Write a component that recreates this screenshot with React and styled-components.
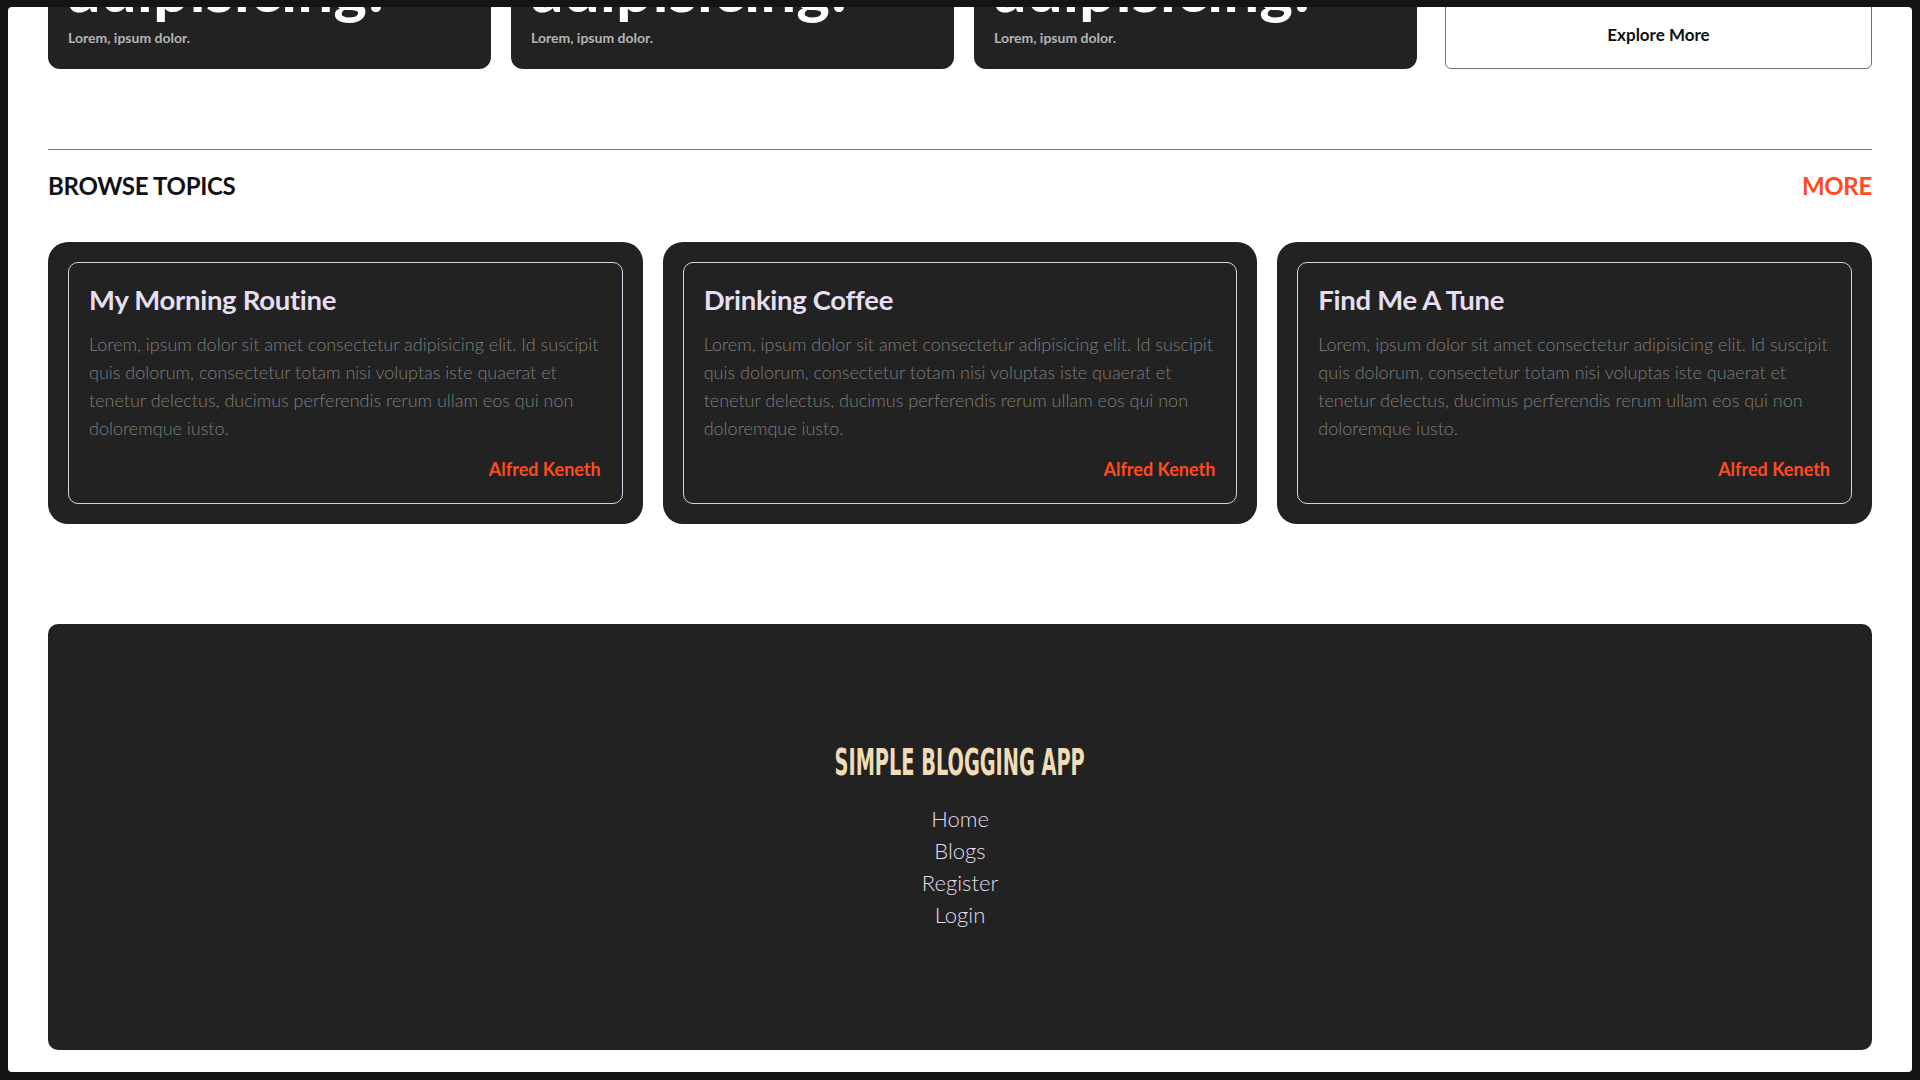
import React from "react";
import styled, { createGlobalStyle } from "styled-components";

const GlobalStyle = createGlobalStyle`
  html, body {
    margin: 0;
    background: #141414;
    font-family: "Lato", "Open Sans", sans-serif;
  }
  * { box-sizing: border-box; }
`;

const featured = ["one", "two", "three"];

const topics = [
    { title: "My Morning Routine", author: "Alfred Keneth" },
    { title: "Drinking Coffee", author: "Alfred Keneth" },
    { title: "Find Me A Tune", author: "Alfred Keneth" },
];

const lorem =
    "Lorem, ipsum dolor sit amet consectetur adipisicing elit. Id suscipit quis dolorum, consectetur totam nisi voluptas iste quaerat et tenetur delectus, ducimus perferendis rerum ullam eos qui non doloremque iusto.";

const Screen = styled.div`
  height: 100vh;
  padding: 7px 8px 8px;
`;
const Panel = styled.div`
  height: 100%;
  background: #ffffff;
  border-radius: 4px;
  overflow: hidden;
  padding: 0 40px;
`;
const FeaturedRow = styled.div`
  display: grid;
  grid-template-columns: repeat(3, 443px) 1fr;
  gap: 20px;
  align-items: end;
  margin-top: -138px;
`;
const FeatureCard = styled.div`
  height: 200px;
  background: #222222;
  border-radius: 12px;
  padding: 20px 20px 22px;
  display: flex;
  flex-direction: column;
  justify-content: flex-end;
  overflow: hidden;
`;
const FeatureTitle = styled.h2`
  margin: 0 0 9px;
  color: #ffffff;
  font-size: 64px;
  font-weight: 700;
  line-height: 1;
`;
const FeatureSub = styled.span`
  color: #b4b4b4;
  font-size: 14px;
  font-weight: 700;
  line-height: 18px;
`;
const ExploreButton = styled.button`
  margin-left: 8px;
  height: 70px;
  background: #ffffff;
  border: 1px solid #6f6f6f;
  border-radius: 6px;
  font-family: inherit;
  font-size: 17px;
  font-weight: 700;
  color: #111111;
  cursor: pointer;
`;
const Divider = styled.hr`
  margin: 80px 0 0;
  border: none;
  height: 1px;
  background: #7c7c7c;
`;
const SectionHeader = styled.div`
  display: flex;
  justify-content: space-between;
  align-items: center;
  margin: 20px 0 42px;
  height: 30px;
`;
const SectionTitle = styled.h3`
  margin: 0;
  font-size: 24px;
  font-weight: 700;
  color: #111111;
  letter-spacing: -0.3px;
`;
const MoreLink = styled.a`
  font-size: 24px;
  font-weight: 700;
  color: #ff4b1f;
  text-decoration: none;
  letter-spacing: -0.3px;
`;
const TopicGrid = styled.div`
  display: grid;
  grid-template-columns: repeat(3, 1fr);
  gap: 20px;
`;
const TopicCard = styled.article`
  background: #222222;
  border-radius: 20px;
  padding: 20px;
`;
const TopicInner = styled.div`
  border: 1px solid #d8d2e6;
  border-radius: 10px;
  padding: 20px 21px 23px 20px;
  display: flex;
  flex-direction: column;
`;
const TopicTitle = styled.h4`
  margin: 0 0 13px;
  color: #e6dff3;
  font-size: 27.5px;
  font-weight: 700;
  line-height: 34px;
  letter-spacing: -0.3px;
`;
const TopicText = styled.p`
  margin: 0 0 16px;
  color: #7e7e7e;
  font-size: 18px;
  font-weight: 300;
  line-height: 28px;
`;
const Author = styled.span`
  align-self: flex-end;
  color: #ff4b1f;
  font-size: 18px;
  font-weight: 700;
  line-height: 22px;
`;
const Footer = styled.footer`
  margin-top: 100px;
  height: 426px;
  background: #222222;
  border-radius: 10px;
  display: flex;
  flex-direction: column;
  align-items: center;
  justify-content: center;
`;
const Brand = styled.span`
  display: inline-block;
  font-family: "DejaVu Sans Condensed", "DejaVu Sans", sans-serif;
  font-weight: 700;
  font-size: 37px;
  line-height: 40px;
  color: #f0dcb6;
  transform: scaleX(0.58);
  margin-bottom: 20px;
  white-space: nowrap;
`;
const FooterNav = styled.nav`
  display: flex;
  flex-direction: column;
  align-items: center;
`;
const FooterLink = styled.a`
  color: #e2ddec;
  font-size: 22px;
  font-weight: 300;
  line-height: 32px;
  text-decoration: none;
`;

const App = () => {
    return (
        <>
            <GlobalStyle />
            <Screen>
                <Panel>
                    <FeaturedRow>
                        {featured.map((key) => (
                            <FeatureCard key={key}>
                                <FeatureTitle>Lorem ipsum dolor adipisicing!</FeatureTitle>
                                <FeatureSub>Lorem, ipsum dolor.</FeatureSub>
                            </FeatureCard>
                        ))}
                        <ExploreButton>Explore More</ExploreButton>
                    </FeaturedRow>

                    <Divider />
                    <SectionHeader>
                        <SectionTitle>BROWSE TOPICS</SectionTitle>
                        <MoreLink href="#">MORE</MoreLink>
                    </SectionHeader>

                    <TopicGrid>
                        {topics.map((t) => (
                            <TopicCard key={t.title}>
                                <TopicInner>
                                    <TopicTitle>{t.title}</TopicTitle>
                                    <TopicText>{lorem}</TopicText>
                                    <Author>{t.author}</Author>
                                </TopicInner>
                            </TopicCard>
                        ))}
                    </TopicGrid>

                    <Footer>
                        <Brand>SIMPLE BLOGGING APP</Brand>
                        <FooterNav>
                            <FooterLink href="#">Home</FooterLink>
                            <FooterLink href="#">Blogs</FooterLink>
                            <FooterLink href="#">Register</FooterLink>
                            <FooterLink href="#">Login</FooterLink>
                        </FooterNav>
                    </Footer>
                </Panel>
            </Screen>
        </>
    );
};

export default App;
